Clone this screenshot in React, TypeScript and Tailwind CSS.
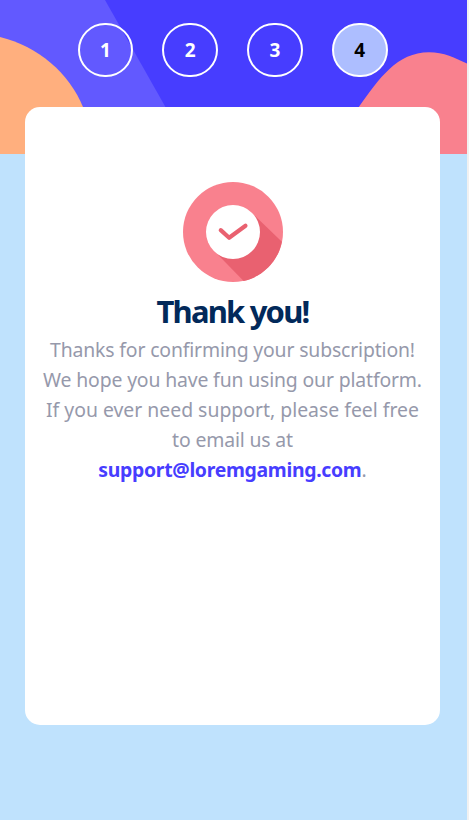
import React from "react";

const steps = [1, 2, 3, 4];
const activeStep = 4;

function HeaderShapes() {
  return (
    <svg className="absolute inset-0" width="467" height="154" viewBox="0 0 467 154" aria-hidden="true">
      <path d="M0 0H467V154H0Z" fill="#473dff" />
      <path d="M0 0H105L192 154H0Z" fill="#6259ff" />
      <path d="M0 37C38 46 69 73 83 107C89 122 92 138 93 154H0Z" fill="#ffaf7e" />
      <path d="M332 154C341 133 350 118 359.5 106C379 79 397 52.3 429 52.3C444 52.3 455 58 467 63.5V154Z" fill="#f9818e" />
    </svg>
  );
}

function Steps() {
  return (
    <nav className="relative flex justify-center gap-[29px] pt-[23px] pr-[1.8px]">
      {steps.map((step) => (
        <div
          key={step}
          className={`flex h-[54px] w-[55.8px] items-center justify-center rounded-full border-2 border-white pt-px font-['Noto_Sans',sans-serif] text-[19px] font-bold ${
            step === activeStep ? "bg-[#adbeff] text-black" : "text-white"
          }`}
        >
          {step}
        </div>
      ))}
    </nav>
  );
}

function ThankYouIcon() {
  return (
    <svg width="100" height="100" viewBox="0 0 80 80" aria-hidden="true">
      <circle cx="40" cy="40" r="40" fill="#f9818e" />
      <path d="M48.5 79.1C63.7 75.8 75.9 63.7 79.1 47.8L57.5 27L27.2 57.4Z" fill="#e96170" />
      <circle cx="40" cy="40" r="21.6" fill="#fff" />
      <path d="M30.2 38.5L36.9 44.6L50 35" fill="none" stroke="#e96170" strokeWidth="3.3" strokeLinecap="round" strokeLinejoin="round" />
    </svg>
  );
}

export default function App() {
  return (
    <div className="h-[820px] w-[469px] overflow-hidden bg-[#f1f1f1] font-['Noto_Sans',sans-serif]">
      <div className="h-full w-[467px] bg-[#bfe2fd]">
        <header className="relative h-[107px]">
          <HeaderShapes />
          <Steps />
        </header>
        <main className="relative ml-[25px] flex h-[618px] w-[415px] flex-col items-center rounded-[15px] bg-white pt-[75px]">
          <ThankYouIcon />
          <h1 className="mt-[9px] text-[31px] leading-[40px] font-bold tracking-[-1.8px] whitespace-nowrap text-[#02295a]">
            Thank you!
          </h1>
          <p className="mt-[4px] flex flex-col items-center text-[19.4px] leading-[30px] whitespace-nowrap text-[#9699ab]">
            <span className="tracking-[-0.15px]">Thanks for confirming your subscription!</span>
            <span className="tracking-[-0.15px]">We hope you have fun using our platform.</span>
            <span className="tracking-[0px]">If you ever need support, please feel free</span>
            <span className="tracking-[-0.15px]">to email us at</span>
            <span>
              <a className="font-bold tracking-[-0.3px] text-[#473dff]">support@loremgaming.com</a>.
            </span>
          </p>
        </main>
      </div>
    </div>
  );
}
